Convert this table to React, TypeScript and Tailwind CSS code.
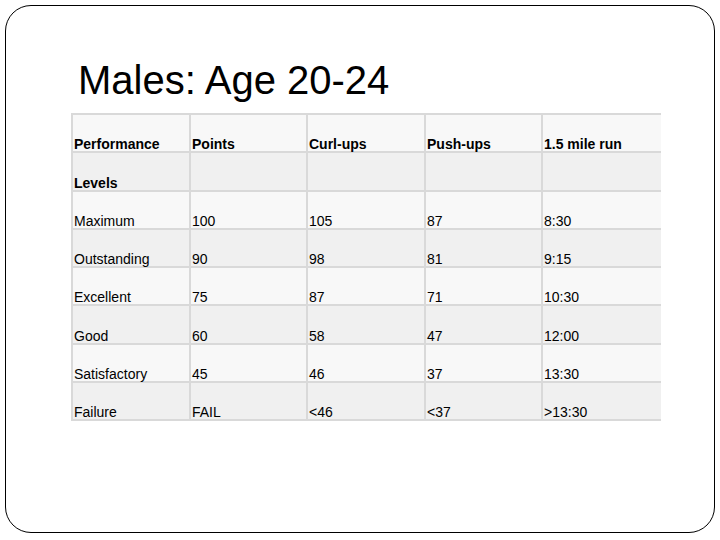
import React from "react";

const rows: string[][] = [
  ["Performance", "Points", "Curl-ups", "Push-ups", "1.5 mile run"],
  ["Levels", "", "", "", ""],
  ["Maximum", "100", "105", "87", "8:30"],
  ["Outstanding", "90", "98", "81", "9:15"],
  ["Excellent", "75", "87", "71", "10:30"],
  ["Good", "60", "58", "47", "12:00"],
  ["Satisfactory", "45", "46", "37", "13:30"],
  ["Failure", "FAIL", "<46", "<37", ">13:30"],
];

export default function App() {
  return (
    <div
      className="w-[720px] h-[540px] bg-white relative overflow-hidden"
      style={{ fontFamily: '"Liberation Sans", Arial, sans-serif' }}
    >
      <div className="absolute left-[5px] top-[5px] w-[710px] h-[528px] border-[1.5px] border-black rounded-[26px]" />
      <div className="relative pt-[57px] pl-[78px]">
        <h1 className="text-[40px] leading-[46px] text-black">Males: Age 20-24</h1>
      </div>
      <div className="relative ml-[71px] mt-[10px] w-[590px] bg-[#d9d9d9] p-[2px] grid grid-cols-[116px_115px_116px_115px_118px] gap-[2px]">
        {rows.map((r, i) =>
          r.map((c, j) => (
            <div
              key={`${i}-${j}`}
              className={`${i % 2 === 0 ? "bg-[#f8f8f8]" : "bg-[#f0f0f0]"} h-[36.3px] flex items-end pl-[1px] text-[14px] leading-[14px] text-black ${i < 2 ? "font-bold" : ""}`}
            >
              {c}
            </div>
          ))
        )}
      </div>
    </div>
  );
}
